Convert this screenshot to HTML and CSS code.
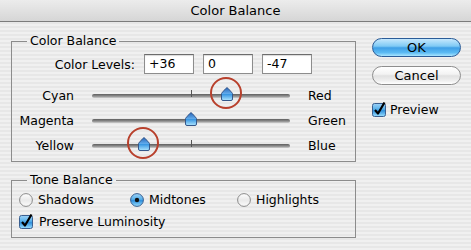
FILE: index.html
```html
<!DOCTYPE html>
<html>
<head>
<meta charset="utf-8">
<link rel="stylesheet" href="styles.css">
</head>
<body>
<svg class="defs" width="0" height="0" aria-hidden="true">
  <defs>
    <linearGradient id="thumbGrad" x1="0" y1="0" x2="0" y2="1">
      <stop offset="0" stop-color="#2a66b8"/>
      <stop offset="0.45" stop-color="#5fa9ea"/>
      <stop offset="0.52" stop-color="#3996e2"/>
      <stop offset="1" stop-color="#aee6ff"/>
    </linearGradient>
    <linearGradient id="blueBox" x1="0" y1="0" x2="0" y2="1">
      <stop offset="0" stop-color="#9fd3f7"/>
      <stop offset="0.45" stop-color="#54aee9"/>
      <stop offset="0.55" stop-color="#2f8fdc"/>
      <stop offset="1" stop-color="#9be0ff"/>
    </linearGradient>
    <linearGradient id="whiteBox" x1="0" y1="0" x2="0" y2="1">
      <stop offset="0" stop-color="#ffffff"/>
      <stop offset="0.5" stop-color="#e9e9e9"/>
      <stop offset="1" stop-color="#fbfbfb"/>
    </linearGradient>
  </defs>
</svg>

<div class="titlebar">Color Balance</div>

<div class="main">
  <div class="left">
    <fieldset class="group g1">
      <legend>Color Balance</legend>
      <div class="levels">
        <span class="levels-label">Color Levels:</span>
        <span class="field">+36</span>
        <span class="field">0</span>
        <span class="field">-47</span>
      </div>
      <div class="sliders">
        <div class="slider-row">
          <span class="lbl-left">Cyan</span>
          <div class="track">
            <span class="tick"></span>
            <span class="thumb" style="left:68%">
              <svg width="12" height="14" viewBox="0 0 12 14"><path d="M6 0.8 Q6.6 0.8 7.2 1.5 L11.2 6 Q11.5 6.4 11.5 7 V12 Q11.5 13.5 10 13.5 H2 Q0.5 13.5 0.5 12 V7 Q0.5 6.4 0.8 6 L4.8 1.5 Q5.4 0.8 6 0.8 Z" fill="url(#thumbGrad)" stroke="#34578a" stroke-width="1"/></svg>
              <span class="ring"></span>
            </span>
          </div>
          <span class="lbl-right">Red</span>
        </div>
        <div class="slider-row">
          <span class="lbl-left">Magenta</span>
          <div class="track">
            <span class="tick"></span>
            <span class="thumb" style="left:50%">
              <svg width="12" height="14" viewBox="0 0 12 14"><path d="M6 0.8 Q6.6 0.8 7.2 1.5 L11.2 6 Q11.5 6.4 11.5 7 V12 Q11.5 13.5 10 13.5 H2 Q0.5 13.5 0.5 12 V7 Q0.5 6.4 0.8 6 L4.8 1.5 Q5.4 0.8 6 0.8 Z" fill="url(#thumbGrad)" stroke="#34578a" stroke-width="1"/></svg>
            </span>
          </div>
          <span class="lbl-right">Green</span>
        </div>
        <div class="slider-row">
          <span class="lbl-left">Yellow</span>
          <div class="track">
            <span class="tick"></span>
            <span class="thumb" style="left:26.5%">
              <svg width="12" height="14" viewBox="0 0 12 14"><path d="M6 0.8 Q6.6 0.8 7.2 1.5 L11.2 6 Q11.5 6.4 11.5 7 V12 Q11.5 13.5 10 13.5 H2 Q0.5 13.5 0.5 12 V7 Q0.5 6.4 0.8 6 L4.8 1.5 Q5.4 0.8 6 0.8 Z" fill="url(#thumbGrad)" stroke="#34578a" stroke-width="1"/></svg>
              <span class="ring"></span>
            </span>
          </div>
          <span class="lbl-right">Blue</span>
        </div>
      </div>
    </fieldset>

    <fieldset class="group g2">
      <legend>Tone Balance</legend>
      <div class="radios">
        <span class="opt">
          <svg class="radio" width="14" height="14" viewBox="0 0 14 14"><circle cx="7" cy="7" r="6.4" fill="url(#whiteBox)" stroke="#8a8a8a" stroke-width="1"/></svg>
          Shadows
        </span>
        <span class="opt">
          <svg class="radio" width="14" height="14" viewBox="0 0 14 14"><circle cx="7" cy="7" r="6.4" fill="url(#blueBox)" stroke="#3a5f90" stroke-width="1"/><circle cx="7" cy="7" r="2.2" fill="#111"/></svg>
          Midtones
        </span>
        <span class="opt">
          <svg class="radio" width="14" height="14" viewBox="0 0 14 14"><circle cx="7" cy="7" r="6.4" fill="url(#whiteBox)" stroke="#8a8a8a" stroke-width="1"/></svg>
          Highlights
        </span>
      </div>
      <div class="check-row">
        <svg class="check" width="14" height="15" viewBox="0 0 14 15"><rect x="0.5" y="1.5" width="13" height="13" rx="2" fill="url(#blueBox)" stroke="#3a5f90"/><path d="M3 8 L6 11.5 L12.5 0.5" fill="none" stroke="#000" stroke-width="2.2" stroke-linejoin="round"/></svg>
        <span>Preserve Luminosity</span>
      </div>
    </fieldset>
  </div>

  <div class="right">
    <div class="btn ok">OK</div>
    <div class="btn cancel">Cancel</div>
    <div class="preview">
      <svg class="check" width="14" height="15" viewBox="0 0 14 15"><rect x="0.5" y="1.5" width="13" height="13" rx="2" fill="url(#blueBox)" stroke="#3a5f90"/><path d="M3 8 L6 11.5 L12.5 0.5" fill="none" stroke="#000" stroke-width="2.2" stroke-linejoin="round"/></svg>
      <span>Preview</span>
    </div>
  </div>
</div>
</body>
</html>
```

FILE: styles.css
```css
html, body {
  margin: 0;
  padding: 0;
}

body {
  width: 471px;
  height: 250px;
  overflow: hidden;
  font-family: "DejaVu Sans", "Open Sans", sans-serif;
  font-size: 12.5px;
  color: #000;
  background: repeating-linear-gradient(to bottom, #f0f0f0 0 2px, #e7e7e7 2px 4px);
}

.defs {
  position: absolute;
  width: 0;
  height: 0;
}

.titlebar {
  height: 21px;
  line-height: 21px;
  text-align: center;
  font-size: 13px;
  border-bottom: 1px solid #7c7c7c;
  background: linear-gradient(#ececec, #d6d6d6);
}

.main {
  display: flex;
  padding: 11px 0 0 11px;
}

.group {
  margin: 0;
  padding: 0;
  width: 345px;
  box-sizing: border-box;
  min-width: 0;
  border: 1px solid #8c8c8c;
}

.group legend {
  margin-left: 15px;
  padding: 0 3px;
  line-height: 16px;
  font-size: 12.5px;
}

.levels {
  display: flex;
  align-items: center;
  gap: 9px;
  margin-top: 5px;
  height: 20px;
}

.levels-label {
  width: 123px;
  text-align: right;
}

.field {
  width: 50px;
  height: 20px;
  box-sizing: border-box;
  border: 1px solid #8d8d8d;
  border-top-color: #6c6c6c;
  background: #fff;
  padding-left: 4px;
  line-height: 18px;
  box-shadow: inset 0 1px 1px rgba(0, 0, 0, 0.15);
}

.sliders {
  margin-top: 9px;
  margin-bottom: 3px;
}

.slider-row {
  display: grid;
  grid-template-columns: 62px 198px auto;
  column-gap: 18px;
  height: 25px;
  align-items: center;
}

.lbl-left {
  text-align: right;
}

.track {
  position: relative;
  height: 4px;
  border-radius: 2px;
  background: linear-gradient(#5e5e5e, #8e8e8e 55%, #cfcfcf);
}

.tick {
  position: absolute;
  left: 50%;
  top: -4px;
  width: 1px;
  height: 7px;
  background: #555;
}

.thumb {
  position: absolute;
  top: -7px;
  width: 12px;
  height: 14px;
  margin-left: -6px;
}

.thumb svg {
  display: block;
}

.ring {
  position: absolute;
  left: -11px;
  top: -10px;
  width: 32px;
  height: 32px;
  box-sizing: border-box;
  border: 2.5px solid #b8402c;
  border-radius: 50%;
}

.g2 {
  margin-top: 10px;
  padding-bottom: 5px;
}

.radios {
  display: grid;
  grid-template-columns: 111px 107px auto;
  padding-left: 7px;
  height: 23px;
  align-items: center;
}

.opt {
  display: flex;
  align-items: center;
  gap: 5px;
}

.radio, .check {
  display: block;
  overflow: visible;
  flex: none;
}

.check-row {
  display: flex;
  align-items: center;
  gap: 6px;
  padding-left: 7px;
  height: 21px;
}

.right {
  margin-left: 16px;
  padding-top: 5px;
  width: 89px;
  display: flex;
  flex-direction: column;
}

.btn {
  height: 19px;
  box-sizing: border-box;
  border-radius: 10px;
  text-align: center;
  line-height: 17px;
  font-size: 13px;
}

.ok {
  border: 1px solid #2b5c98;
  background: linear-gradient(#c6e8fd 0%, #7fcaf5 42%, #3f9fe6 52%, #5bbaf3 80%, #a9e5ff 100%);
}

.cancel {
  margin-top: 9px;
  border: 1px solid #8e8e8e;
  background: linear-gradient(#ffffff 0%, #f3f3f3 42%, #e1e1e1 52%, #efefef 80%, #ffffff 100%);
}

.preview {
  margin-top: 16px;
  display: flex;
  align-items: center;
  gap: 4px;
  height: 16px;
}
```
